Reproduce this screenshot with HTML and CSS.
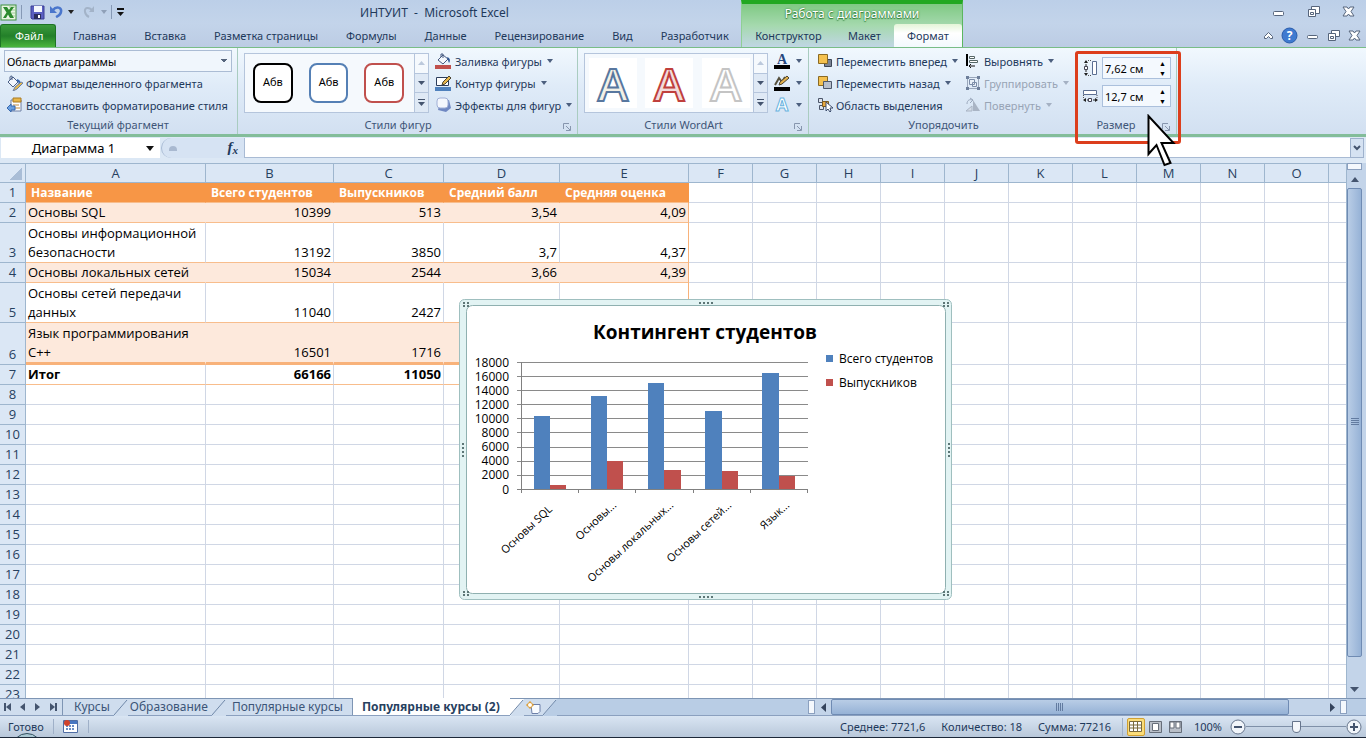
FILE: index.html
```html
<!doctype html>
<html lang="ru">
<head>
<meta charset="utf-8">
<title>ИНТУИТ - Microsoft Excel</title>
<link rel="stylesheet" href="styles.css">
</head>
<body>
<header class="top">
	<div class="top-left">
		<div class="quick">
			<svg class="logo" width="17" height="17" viewBox="0 0 17 17"><rect x="1" y="1" width="15" height="15" fill="#e9f5e4" stroke="#3f8f3f"/><path d="M9 3h6M9 6h6M9 9h6M9 12h6" stroke="#9fcf98"/><path d="M3 3h4l2 3 2-3h3l-3.500 5L14 14h-4l-2-3.500L6 14H3l3.500-5.500z" fill="#2c8a2e"/></svg>
			<i class="bar"></i>
			<button class="ico save" aria-label="Сохранить"><svg width="15" height="15" viewBox="0 0 15 15"><path d="M1 1h13v13H2l-1-1z" fill="#5a5fc0" stroke="#3b3f96"/><path d="M4 1h8v6H4z" fill="#f4f7fc"/><path d="M4 9h7v5H4z" fill="#2a2d5c"/><path d="M8 10h2v3H8z" fill="#fff"/></svg></button>
			<button class="ico undo" aria-label="Отменить"><svg width="14" height="14" viewBox="0 0 14 14"><path d="M4 5c3-4 9-3 8 2-.5 3-3 4-5 5" fill="none" stroke="#4a76cc" stroke-width="2.500"/><path d="M1 1v7h7z" fill="#4a76cc"/></svg></button>
			<svg class="car" width="7" height="4"><path d="M1 0h6L4 4z" fill="#222"/></svg>
			<button class="ico redo" aria-label="Вернуть"><svg width="14" height="14" viewBox="0 0 14 14"><path d="M10 5C7 2 2 2 3 7c.5 3 2 4 4 5" fill="none" stroke="#a3b3c8" stroke-width="2"/><path d="M12 1v6H7z" fill="#a3b3c8"/></svg></button>
			<svg class="car" width="7" height="4"><path d="M1 0h6L4 4z" fill="#8fa0b8"/></svg>
			<i class="bar"></i>
			<svg class="car" width="8" height="8"><path d="M1 1h7" stroke="#111" stroke-width="2"/><path d="M1 4h7L4.500 8z" fill="#111"/></svg>
			<div class="title">ИНТУИТ&nbsp; -&nbsp; Microsoft Excel</div>
		</div>
		<nav class="tabs">
			<a class="file" href="#">Файл</a>
			<a href="#">Главная</a>
			<a href="#">Вставка</a>
			<a href="#">Разметка страницы</a>
			<a href="#">Формулы</a>
			<a href="#">Данные</a>
			<a href="#">Рецензирование</a>
			<a href="#">Вид</a>
			<a href="#">Разработчик</a>
		</nav>
	</div>
	<div class="context">
		<div class="context-name">Работа с диаграммами</div>
		<nav class="tabs">
			<a href="#">Конструктор</a>
			<a href="#">Макет</a>
			<a class="on" href="#">Формат</a>
		</nav>
	</div>
	<div class="top-right">
		<div class="win">
			<button class="ico" aria-label="Свернуть"><svg width="13" height="13" viewBox="0 0 13 13"><rect x="1.500" y="6.500" width="10" height="4" rx="1" fill="#fff" stroke="#56657c"/></svg></button>
			<button class="ico" aria-label="Окно"><svg width="13" height="13" viewBox="0 0 13 13"><g fill="#fff" stroke="#56657c"><path d="M4.500 1.500h8v7h-8z"/><path d="M1.500 4.500h7v7h-7z"/><path d="M3.500 7.500h3v2h-3z"/></g></svg></button>
			<button class="ico" aria-label="Закрыть"><svg width="13" height="13" viewBox="0 0 13 13"><path d="M1 2h4l1.500 2L8 2h4L9 6.500l3 4.500H8L6.500 9 5 11H1l3-4.500z" fill="#fff" stroke="#56657c"/></svg></button>
		</div>
		<div class="win win-doc">
			<button class="ico" aria-label="Свернуть ленту"><svg width="9" height="9" viewBox="0 0 9 9"><path d="M.5 5.500l4-4 4 4v2h-2l-2-2-2 2h-2z" fill="#fff" stroke="#56657c"/></svg></button>
			<button class="ico" aria-label="Справка"><svg width="17" height="17" viewBox="0 0 17 17"><circle cx="8.500" cy="8.500" r="7.500" fill="#3f7ad0" stroke="#2a5cab"/><text x="8.500" y="13" text-anchor="middle" class="q">?</text></svg></button>
			<button class="ico" aria-label="Свернуть книгу"><svg width="13" height="13" viewBox="0 0 13 13"><rect x="1.500" y="6.500" width="10" height="3" rx="1" fill="#fff" stroke="#56657c"/></svg></button>
			<button class="ico" aria-label="Окно книги"><svg width="13" height="13" viewBox="0 0 13 13"><g fill="#fff" stroke="#56657c"><path d="M4.500 1.500h8v6h-8z"/><path d="M1.500 4.500h7v7h-7z"/><path d="M3.500 7.500h3v2h-3z"/></g></svg></button>
			<button class="ico" aria-label="Закрыть книгу"><svg width="13" height="13" viewBox="0 0 13 13"><path d="M1 2h4l1.500 2L8 2h4L9 6.500l3 4.500H8L6.500 9 5 11H1l3-4.500z" fill="#fff" stroke="#56657c"/></svg></button>
		</div>
	</div>
</header>

<section class="ribbon">
	<div class="group g-current">
		<div class="body col">
			<select class="area" aria-label="Элемент диаграммы"><option>Область диаграммы</option></select>
			<button class="cmd"><svg width="16" height="16" viewBox="0 0 16 16"><path d="M1 7l5-5 5 5-5 5z" fill="#f2f6fc" stroke="#4a5f86"/><path d="M3 5V2q0-1 2-1v4" fill="none" stroke="#4a5f86"/><path d="M10 5c3 1 3 3 2 5" stroke="#3465b0" stroke-width="2" fill="none"/><path d="M14 7l2 1-6 6-4 2 2-4z" fill="#e9bb4b" stroke="#6c7fa5"/></svg>Формат выделенного фрагмента</button>
			<button class="cmd"><svg width="16" height="16" viewBox="0 0 16 16"><path d="M4 3h10v11H4z" fill="#fff" stroke="#6d7fa3"/><path d="M6 1h8v4H6z" fill="#e8b64a" stroke="#a97b22"/><path d="M6 8h6M7 11h6" stroke="#c08a3e"/><path d="M0 11l4-4v2h4v4H4v2z" fill="#6aa0e2" stroke="#3869ae"/></svg>Восстановить форматирование стиля</button>
		</div>
		<div class="name">Текущий фрагмент</div>
	</div>

	<div class="group g-shapes">
		<div class="body">
			<div class="gallery">
				<button class="shape black">Абв</button>
				<button class="shape blue">Абв</button>
				<button class="shape red">Абв</button>
				<div class="scroll">
					<button aria-label="Вверх"><svg width="7" height="4"><path d="M0 4h7L3.500 0z" fill="#bcc9dc"/></svg></button>
					<button aria-label="Вниз"><svg width="7" height="4"><path d="M0 0h7L3.500 4z" fill="#44546e"/></svg></button>
					<button aria-label="Ещё"><svg width="7" height="7"><path d="M0 .5h7" stroke="#44546e"/><path d="M0 3h7L3.500 7z" fill="#44546e"/></svg></button>
				</div>
			</div>
			<div class="col">
				<button class="cmd"><svg width="17" height="16" viewBox="0 0 17 16"><path d="M3 7l5-5 5 4-5 5z" fill="#f4f8fd" stroke="#465a80"/><path d="M6 4V1h2v4" fill="none" stroke="#465a80"/><path d="M12 4c4 1 3 5 2 6-1-2-1-4-2-6z" fill="#2e5796"/><path d="M0 12h16v4H0z" fill="#c0504d"/></svg>Заливка фигуры<i class="dd"></i></button>
				<button class="cmd"><svg width="17" height="16" viewBox="0 0 17 16"><path d="M1.500 2.500h12v8h-12z" fill="#fff" stroke="#2c3d5c"/><path d="M14 1l2 2-6 6-3 1 1-3z" fill="#e8b64a" stroke="#4b4432"/><path d="M0 12h16v4H0z" fill="#4f81bd"/></svg>Контур фигуры<i class="dd"></i></button>
				<button class="cmd"><svg width="17" height="16" viewBox="0 0 17 16"><path d="M5 5l9-2 2 8-5 4-8-2z" fill="#7088c2"/><rect x="2" y="1" width="11" height="10" rx="3" fill="#f4f7fd" stroke="#a0afd6"/></svg>Эффекты для фигур<i class="dd"></i></button>
			</div>
		</div>
		<div class="name has-launch">Стили фигур</div>
		<svg class="launch" width="8" height="8"><path d="M.5 6V.5H6M3 3l4 4M7.500 3v4.500H3" fill="none" stroke="#8796ae"/></svg>
	</div>

	<div class="group g-art">
		<div class="body">
			<div class="gallery">
				<button class="art a1">A</button>
				<button class="art a2">A</button>
				<button class="art a3">A</button>
				<div class="scroll">
					<button aria-label="Вверх"><svg width="7" height="4"><path d="M0 4h7L3.500 0z" fill="#bcc9dc"/></svg></button>
					<button aria-label="Вниз"><svg width="7" height="4"><path d="M0 0h7L3.500 4z" fill="#44546e"/></svg></button>
					<button aria-label="Ещё"><svg width="7" height="7"><path d="M0 .5h7" stroke="#44546e"/><path d="M0 3h7L3.500 7z" fill="#44546e"/></svg></button>
				</div>
			</div>
			<div class="col">
				<button class="cmd" aria-label="Заливка текста"><svg width="17" height="16" viewBox="0 0 17 16"><text x="8" y="11" text-anchor="middle" class="ia">A</text><path d="M0 12h16v4H0z" fill="#000"/></svg><i class="dd"></i></button>
				<button class="cmd" aria-label="Контур текста"><svg width="17" height="16" viewBox="0 0 17 16"><path d="M1 10l4-7 3 4 3-5" fill="none" stroke="#55503e" stroke-width="2"/><path d="M13 1l2 2-7 6-3 1 1-3z" fill="#e3b14c" stroke="#4b4432"/><path d="M0 12h16v4H0z" fill="#000"/></svg><i class="dd"></i></button>
				<button class="cmd" aria-label="Текстовые эффекты"><svg width="17" height="16" viewBox="0 0 17 16"><text x="8" y="14" text-anchor="middle" class="ie">A</text></svg><i class="dd"></i></button>
			</div>
		</div>
		<div class="name has-launch">Стили WordArt</div>
		<svg class="launch" width="8" height="8"><path d="M.5 6V.5H6M3 3l4 4M7.500 3v4.500H3" fill="none" stroke="#8796ae"/></svg>
	</div>

	<div class="group g-arrange">
		<div class="body">
			<div class="col">
				<button class="cmd"><svg width="16" height="16" viewBox="0 0 16 16"><path d="M7.500 6.500h7v7h-7z" fill="#7b8495" stroke="#3d4657"/><path d="M1.500 1.500h9v9h-9z" fill="#f5c14e" stroke="#8a6a24"/></svg>Переместить вперед<i class="dd"></i></button>
				<button class="cmd"><svg width="16" height="16" viewBox="0 0 16 16"><path d="M1.500 1.500h9v9h-9z" fill="#f5c14e" stroke="#8a6a24"/><path d="M6.500 6.500h8v7h-8z" fill="#b9c0cc" stroke="#4c566a"/></svg>Переместить назад<i class="dd"></i></button>
				<button class="cmd"><svg width="16" height="16" viewBox="0 0 16 16"><path d="M1.500 1.500h4v4h-4zM2.500 8.500h4v4h-4z" fill="#dce2ec" stroke="#4c566a"/><path d="M5.500 4.500h6v5h-6z" fill="#e9a83e" stroke="#7c5a20"/><path d="M9 5v9l2-2 2 3 1-1-1-3h3z" fill="#fff" stroke="#3c4d6e"/></svg>Область выделения</button>
			</div>
			<div class="col">
				<button class="cmd"><svg width="16" height="16" viewBox="0 0 16 16"><path d="M2 1v12" stroke="#000" stroke-width="2"/><path d="M4.500 3.500h5v2h-5zM4.500 7.500h8v2h-8z" fill="#fff" stroke="#566"/><path d="M4 13h6M4 13l2-2M4 13l2 2" stroke="#111" fill="none"/></svg>Выровнять<i class="dd"></i></button>
				<button class="cmd" disabled><svg width="16" height="16" viewBox="0 0 16 16"><path d="M2.500 2.500h11v11h-11z" fill="none" stroke="#9aa7bb"/><path d="M4.500 4.500h5v5h-5zM7.500 7.500h4v4h-4z" fill="#e9f0f8" stroke="#7c8da8"/><path d="M1 1h3v3H1zM12 1h3v3h-3zM1 12h3v3H1zM12 12h3v3h-3z" fill="#6d7f9b"/></svg>Группировать<i class="dd"></i></button>
				<button class="cmd" disabled><svg width="16" height="16" viewBox="0 0 16 16"><path d="M8 14V3l7 11z" fill="#a9b4c4"/><path d="M1 14l6-5v5z" fill="#d6dde8" stroke="#a9b4c4"/><path d="M2 7c0-4 3-5 5-4M5 1l3 2-3 3" fill="none" stroke="#9aa7bb"/></svg>Повернуть<i class="dd"></i></button>
			</div>
		</div>
		<div class="name">Упорядочить</div>
	</div>

	<div class="group g-size">
		<div class="body col">
			<div class="size">
				<svg width="15" height="16" viewBox="0 0 15 16"><path d="M9.500 1.500h4v13h-4z" fill="#fff" stroke="#5c6f92"/><path d="M3 1v14" stroke="#222" stroke-dasharray="2 1"/><path d="M1 3l2-3 2 3zM1 13l2 3 2-3z" fill="#222"/><path d="M1.500 6.500h3v3h-3z" fill="#fff" stroke="#445"/><path d="M5 .5h4M5 15.500h4" stroke="#555" stroke-dasharray="1 1"/></svg>
				<span class="spin"><input aria-label="Высота" value="7,62 см"><span class="ud"><button aria-label="Больше">▲</button><button aria-label="Меньше">▼</button></span></span>
			</div>
			<div class="size">
				<svg width="15" height="16" viewBox="0 0 15 16"><path d="M.5 2.500h13v4H.5z" fill="#fff" stroke="#5c6f92"/><path d="M1 12h13" stroke="#222" stroke-dasharray="2 1"/><path d="M3 10l-3 2 3 2zM12 10l3 2-3 2z" fill="#222"/><path d="M5.500 10.500h3v3h-3z" fill="#fff" stroke="#445"/><path d="M.5 7v4M14 7v4" stroke="#555" stroke-dasharray="1 1"/></svg>
				<span class="spin"><input aria-label="Ширина" value="12,7 см"><span class="ud"><button aria-label="Больше">▲</button><button aria-label="Меньше">▼</button></span></span>
			</div>
		</div>
		<div class="name has-launch">Размер</div>
		<svg class="launch" width="8" height="8"><path d="M.5 6V.5H6M3 3l4 4M7.500 3v4.500H3" fill="none" stroke="#8796ae"/></svg>
		<i class="frame"></i>
		<svg class="cursor" width="30" height="54" viewBox="0 0 30 54"><path d="M1.500 2v38l8-9 8 20 6-2-9-20h12z" fill="#fff" stroke="#000" stroke-width="2"/></svg>
	</div>
</section>

<div class="formula">
	<input class="namebox" aria-label="Имя" value="Диаграмма 1">
	<svg class="name-dd" width="8" height="5"><path d="M0 0h8L4 5z" fill="#111"/></svg>
	<div class="fx-area"><i class="knob"></i><button class="fx">f<sub>x</sub></button></div>
	<input class="fx-input" aria-label="Строка формул">
	<button class="expand" aria-label="Развернуть"><svg width="8" height="6"><path d="M1 1l3 3 3-3" fill="none" stroke="#44546e" stroke-width="2"/></svg></button>
</div>

<main class="work">
	<div class="sheet">
		<table class="grid" id="grid">
			<colgroup><col class="c-num"><col class="c-a"><col class="c-b"><col class="c-c"><col class="c-d"><col class="c-e"></colgroup>
			<thead>
				<tr id="letters"><th class="corner"></th><th>A</th><th>B</th><th>C</th><th>D</th><th>E</th></tr>
			</thead>
			<tbody id="rows">
				<tr class="head"><th>1</th><td>Название</td><td>Всего студентов</td><td>Выпускников</td><td>Средний балл</td><td>Средняя оценка</td></tr>
				<tr class="data band"><th>2</th><td>Основы SQL</td><td>10399</td><td>513</td><td>3,54</td><td>4,09</td></tr>
				<tr class="data tall"><th>3</th><td>Основы информационной<br>безопасности</td><td>13192</td><td>3850</td><td>3,7</td><td>4,37</td></tr>
				<tr class="data band"><th>4</th><td>Основы локальных сетей</td><td>15034</td><td>2544</td><td>3,66</td><td>4,39</td></tr>
				<tr class="data tall"><th>5</th><td>Основы сетей передачи<br>данных</td><td>11040</td><td>2427</td><td></td><td></td></tr>
				<tr class="data band last"><th>6</th><td>Язык программирования<br>C++</td><td>16501</td><td>1716</td><td></td><td></td></tr>
				<tr class="data total"><th>7</th><td>Итог</td><td>66166</td><td>11050</td><td></td><td></td></tr>
			</tbody>
		</table>
		<div class="chart">
			<svg width="493" height="301" viewBox="0 0 493 301">
				<rect x=".5" y=".5" width="492" height="300" rx="5" fill="#e2f3f3" stroke="#9fbfbf"/>
				<rect x="7.500" y="6.500" width="479" height="288" rx="6" fill="#fff" stroke="#8fb0b0"/>
				<path d="M240 4h16M240 298h16" stroke="#5d7676" stroke-width="2" stroke-dasharray="2 2"/>
				<path d="M4 144v15M490 144v15" stroke="#5d7676" stroke-width="2" stroke-dasharray="2 2"/>
				<path d="M4 4h6M4 7h6M484 4h6M484 7h6M4 293h6M4 296h6M484 293h6M484 296h6" stroke="#5d7676" stroke-width="2" stroke-dasharray="2 2"/>
				<text class="ch-title" x="246" y="40" text-anchor="middle">Контингент студентов</text>
				<path d="M58 63.500h291M58 77.500h291M58 91.500h291M58 105.500h291M58 119.500h291M58 133.500h291M58 148.500h291M58 162.500h291M58 176.500h291" stroke="#8a8a8a"/>
				<g fill="#4f81bd"><path d="M75 117h16v73H75zM132 97h16v93h-16zM189 84h16v106h-16zM246 112h17v78h-17zM303 74h17v116h-17z"/></g>
				<g fill="#c0504d"><path d="M91 186h16v4H91zM148 162h16v28h-16zM205 171h17v19h-17zM263 172h16v18h-16zM320 177h16v13h-16z"/></g>
				<path d="M62.500 63v131M58 190.500h291M119.500 190v4M176.500 190v4M234.500 190v4M291.500 190v4M348.500 190v4" stroke="#808080" fill="none"/>
				<g class="ch-text" text-anchor="end">
					<text x="50" y="68">18000</text><text x="50" y="82">16000</text><text x="50" y="96">14000</text><text x="50" y="110">12000</text><text x="50" y="124">10000</text><text x="50" y="138">8000</text><text x="50" y="152">6000</text><text x="50" y="166">4000</text><text x="50" y="180">2000</text><text x="50" y="195">0</text>
				</g>
				<g class="ch-cat" text-anchor="end">
					<text transform="translate(94 211) rotate(-43)">Основы SQL</text>
					<text transform="translate(158 207) rotate(-43)">Основы...</text>
					<text transform="translate(215 207) rotate(-43)">Основы локальных...</text>
					<text transform="translate(273 207) rotate(-43)">Основы сетей...</text>
					<text transform="translate(331 207) rotate(-43)">Язык...</text>
				</g>
				<path d="M367 56h7v7h-7z" fill="#4f81bd"/><path d="M367 80h7v7h-7z" fill="#c0504d"/>
				<g class="ch-text"><text x="380" y="64">Всего студентов</text><text x="380" y="88">Выпускников</text></g>
			</svg>
		</div>
	</div>
	<div class="vscroll">
		<i class="split"></i>
		<button aria-label="Вверх"><svg width="8" height="5"><path d="M0 5h8L4 0z" fill="#44546e"/></svg></button>
		<i class="thumb"></i>
		<i class="rest"></i>
		<button aria-label="Вниз"><svg width="9" height="5"><path d="M0 0h9L4.500 5z" fill="#44546e"/></svg></button>
	</div>
</main>

<div class="sheets">
	<div class="nav">
		<button aria-label="Первый"><svg width="8" height="8"><path d="M1 0v8" stroke="#44546e" stroke-width="2"/><path d="M7 0v8L2 4z" fill="#44546e"/></svg></button>
		<button aria-label="Назад"><svg width="8" height="8"><path d="M6 0v8L1 4z" fill="#44546e"/></svg></button>
		<button aria-label="Вперед"><svg width="8" height="8"><path d="M1 0v8l5-4z" fill="#44546e"/></svg></button>
		<button aria-label="Последний"><svg width="8" height="8"><path d="M7 0v8" stroke="#44546e" stroke-width="2"/><path d="M1 0v8l5-4z" fill="#44546e"/></svg></button>
	</div>
	<button class="tab first">Курсы</button>
	<svg class="slash" width="14" height="17"><path d="M0 16L13 1" stroke="#6f87a8"/></svg>
	<button class="tab">Образование</button>
	<svg class="slash" width="14" height="17"><path d="M0 16L13 1" stroke="#6f87a8"/></svg>
	<button class="tab before">Популярные курсы</button>
	<button class="tab on">Популярные курсы (2)</button>
	<svg class="slash" width="14" height="17"><path d="M0 0h14L0 17z" fill="#fff"/><path d="M0 16L13 1" stroke="#6f87a8"/></svg>
	<button class="tab new" aria-label="Вставить лист"><svg width="15" height="13" viewBox="0 0 15 13"><path d="M5 3.500h9v7l-2 2H6z" fill="#f8fbff" stroke="#6d7fa8"/><circle cx="4" cy="4" r="2.500" fill="#fff" stroke="#dc9a2e"/><path d="M4 0v2M4 6v2M0 4h2M6 4h2" stroke="#dc9a2e"/></svg></button>
	<svg class="slash" width="14" height="17"><path d="M14 0v17H0z" fill="#b9cde5"/><path d="M0 16L13 1" stroke="#6f87a8"/></svg>
	<div class="hscroll">
		<i class="split"></i>
		<button aria-label="Влево"><svg width="5" height="9"><path d="M5 0v9L0 4.500z" fill="#34435c"/></svg></button>
		<i class="thumb"></i><i class="rest"></i>
		<button aria-label="Вправо"><svg width="5" height="9"><path d="M0 0v9l5-4.500z" fill="#34435c"/></svg></button>
		<i class="split"></i>
	</div>
</div>

<footer class="status">
	<span class="ready">Готово</span>
	<button class="ico macro" aria-label="Запись макроса"><svg width="15" height="13" viewBox="0 0 15 13"><path d="M.5.5h14v12H.5z" fill="#fff" stroke="#4f6da4"/><path d="M1 1h13v3H1z" fill="#4877c2"/><path d="M3 6h9M3 9h9" stroke="#6a8cc4" stroke-dasharray="2 1" stroke-width="2"/><circle cx="4" cy="3" r="3" fill="#d0432c"/></svg></button>
	<i class="orb"></i>
	<div class="stats"><span>Среднее: 7721,6</span><span>Количество: 18</span><span>Сумма: 77216</span></div>
	<div class="views">
		<button class="on" aria-label="Обычный"><svg width="13" height="11" viewBox="0 0 13 11"><path d="M.5.5h12v10H.5zM.5 4h12M.5 7h12M4.500 0v11M8.500 0v11" fill="#fff" stroke="#7a6a3c"/></svg></button>
		<button aria-label="Разметка страницы"><svg width="13" height="12" viewBox="0 0 13 12"><path d="M.5.5h12v11H.5z" fill="#b9bfc8" stroke="#666e7a"/><path d="M3.500 2.500h6v7h-6z" fill="#fff" stroke="#666e7a"/></svg></button>
		<button aria-label="Страничный"><svg width="13" height="12" viewBox="0 0 13 12"><path d="M.5.5h12v11H.5z" fill="#b9bfc8" stroke="#666e7a"/><path d="M1 1h4v6H1zM7 1h4v6H7z" fill="#fff" stroke="#666e7a"/></svg></button>
	</div>
	<label class="pct" for="zoom">100%</label>
	<button class="ico" aria-label="Уменьшить"><svg width="16" height="16" viewBox="0 0 16 16"><circle cx="8" cy="8" r="7" fill="#f1f5fa" stroke="#66758c"/><path d="M4 8h8" stroke="#44546e" stroke-width="2"/></svg></button>
	<input class="zoom" id="zoom" type="range" min="0" max="100" value="50">
	<button class="ico" aria-label="Увеличить"><svg width="16" height="16" viewBox="0 0 16 16"><circle cx="8" cy="8" r="7" fill="#f1f5fa" stroke="#66758c"/><path d="M4 8h8M8 4v8" stroke="#44546e" stroke-width="2"/></svg></button>
</footer>
<script src="script.js"></script>
</body>
</html>
```
FILE: styles.css
```css
*{
	box-sizing:border-box;
}
body{
	margin:0;
	height:100vh;
	display:flex;
	flex-direction:column;
	overflow:hidden;
	background:#dce8f5;
	font-family:"Noto Sans","Open Sans",sans-serif;
	font-size:11px;
	color:#1e395b;
}
button,input,select{
	font:inherit;
	color:inherit;
	background:none;
	border:0;
	padding:0;
	margin:0;
}
a{
	color:inherit;
	text-decoration:none;
}
svg{
	display:block;
	flex:none;
}
.col{
	display:flex;
	flex-direction:column;
}

/* заголовок и вкладки */
.top{
	display:flex;
	height:47px;
	background:linear-gradient(#bccfe8,#c3d4ea 50%,#bccce4);
}
.top-left{
	width:741px;
}
.quick{
	display:flex;
	align-items:center;
	height:24px;
	gap:4px;
}
.quick .bar{
	width:1px;
	height:14px;
	background:#8699b5;
}
.quick .save,.quick .redo{
	margin-left:4px;
}
.title{
	flex:1;
	text-align:center;
	font-size:12px;
}
.tabs{
	display:flex;
	height:23px;
	line-height:23px;
}
.tabs a{
	padding:0 14px;
	white-space:nowrap;
}
.tabs .file{
	width:56px;
	margin-right:3px;
	text-align:center;
	color:#fff;
	border-radius:3px 3px 0 0;
	border:1px solid #1d7424;
	border-bottom:0;
	line-height:21px;
	background:linear-gradient(#3c9a3c,#238029 50%,#49b53c);
}
.context{
	width:222px;
	border-top:4px solid #22a822;
	border-left:1px solid #8fcf95;
	border-right:1px solid #5bb65f;
	background:linear-gradient(#7fc983,#a5d9ae 50%,#c0d6e4);
}
.context-name{
	height:20px;
	line-height:19px;
	text-align:center;
	font-size:12px;
	color:#fff;
	text-shadow:0 0 2px #2c7a36,0 1px 1px #2c7a36;
}
.context .tabs a{
	padding:0 12px;
	flex:1 1 auto;
	text-align:center;
}
.context .tabs .on{
	border-radius:3px 3px 0 0;
	background:linear-gradient(#e4f5d8,#fff 40%,#f3f9fe);
}
.top-right{
	flex:1;
}
.win{
	display:flex;
	justify-content:flex-end;
	align-items:center;
	height:23px;
	gap:22px;
	padding-right:11px;
}
.win-doc{
	gap:8px;
	height:24px;
	padding-right:5px;
}
.q{
	font:bold 12px "Open Sans",sans-serif;
	fill:#fff;
}

/* лента */
.ribbon{
	display:flex;
	height:90px;
	border-top:1px solid #79bd87;
	border-bottom:3px solid #83bd9a;
	background:linear-gradient(#f1f8fe,#dfebf8 45%,#d2e0f1);
}
.group{
	position:relative;
	display:flex;
	flex-direction:column;
	border-right:1px solid #a9ccc0;
	padding:2px 5px 0 6px;
}
.g-current{
	width:238px;
	padding-left:4px;
}
.g-shapes{
	width:340px;
}
.g-art{
	width:231px;
}
.g-arrange{
	width:266px;
	border-right:0;
}
.g-size{
	width:102px;
}
.body{
	display:flex;
	height:66px;
	gap:6px;
}
.body.col{
	gap:0;
}
.name{
	height:17px;
	line-height:17px;
	text-align:center;
	color:#3f5678;
}
.has-launch{
	padding-right:20px;
}
.launch{
	position:absolute;
	right:6px;
	bottom:3px;
}
.cmd{
	display:flex;
	align-items:center;
	height:22px;
	gap:3px;
	white-space:nowrap;
}
.g-current .cmd{
	padding-left:3px;
}
.cmd:disabled{
	color:#98a4b5;
}
.dd{
	border:3px solid transparent;
	border-top:4px solid #4c5f7e;
	border-bottom:0;
	margin-left:2px;
}
.cmd:disabled .dd{
	border-top-color:#a5b1c3;
}
.area{
	appearance:none;
	height:22px;
	border:1px solid #abbcd4;
	padding:0 2px;
	color:#000;
	background:linear-gradient(to top right,transparent 50%,#56657c 50%) right 7px center/3px 4px no-repeat,linear-gradient(to top left,transparent 50%,#56657c 50%) right 4px center/3px 4px no-repeat,#f0f6fc;
}
.gallery{
	display:flex;
	width:185px;
	height:60px;
	margin-top:3px;
	border:1px solid #b5c5dc;
	background:#f5f9fd;
	align-items:center;
	justify-content:space-between;
	padding-left:8px;
}
.shape{
	width:40px;
	height:40px;
	margin-right:16px;
	border:2px solid;
	border-radius:8px;
	background:#fff;
	color:#000;
	padding-bottom:4px;
}
.shape.black{
	border-color:#000;
}
.shape.blue{
	border-color:#5580b5;
}
.shape.red{
	border-color:#c0504d;
	margin-right:10px;
}
.art{
	width:48px;
	height:50px;
	margin-right:8px;
	background:#fff;
	font:600 46px/48px "Open Sans",sans-serif;
}
.g-art .gallery{
	padding-left:4px;
	width:184px;
}
.a1{
	color:#f3f1e6;
	-webkit-text-stroke:2px #58779f;
}
.a2{
	color:#f2dcdb;
	-webkit-text-stroke:2px #c0403d;
}
.a3{
	color:#fff;
	-webkit-text-stroke:2px #c4c4c4;
	margin-right:3px;
}
.scroll{
	display:flex;
	flex-direction:column;
	width:14px;
	align-self:stretch;
	border-left:1px solid #b5c5dc;
}
.scroll button{
	flex:1;
	display:flex;
	align-items:center;
	justify-content:center;
}
.scroll button + button{
	border-top:1px solid #b5c5dc;
	background:#dfe9f5;
}
.ia{
	font:bold 14px "Liberation Serif",serif;
	fill:#27477d;
}
.ie{
	font:bold 18px "Open Sans",sans-serif;
	fill:#fff;
	stroke:#68b4e0;
}
.g-arrange{
	padding-left:8px;
}
.g-arrange .body{
	gap:7px;
}
.g-size .body{
	padding:7px 0 0 2px;
	gap:6px;
}
.size{
	display:flex;
	align-items:center;
	gap:4px;
}
.spin{
	display:flex;
	width:71px;
	height:22px;
	border:1px solid #abc0dc;
	background:#f4f9fe;
	color:#000;
}
.spin input{
	width:56px;
	padding-left:2px;
}
.ud{
	display:flex;
	flex-direction:column;
	justify-content:center;
	gap:3px;
}
.ud button{
	font-size:7px;
	line-height:7px;
	height:7px;
}
.frame{
	position:absolute;
	left:0;
	top:3px;
	width:106px;
	height:93px;
	border:3px solid #dc3e1c;
	border-radius:3px;
	z-index:2;
}
.cursor{
	position:absolute;
	left:72px;
	top:66px;
	z-index:3;
}

/* строка формул */
.formula{
	display:flex;
	height:26px;
	padding:1px 2px 5px 1px;
	background:#dce8f5;
}
.namebox{
	width:145px;
	background:#fff;
	color:#000;
	font-size:13px;
	text-align:center;
}
.name-dd{
	box-sizing:content-box;
	padding:8px 6px 7px 0;
	background:#fff;
}
.fx-area{
	display:flex;
	justify-content:space-between;
	align-items:center;
	width:84px;
	margin-left:1px;
	padding:0 6px 0 7px;
	border:1px solid #a9bbd4;
	border-width:0 1px 0 1px;
	border-radius:10px 0 0 10px;
	background:#d6e3f3;
}
.knob{
	width:8px;
	height:5px;
	border-radius:5px 5px 0 0;
	background:#a9b9d0;
}
.fx{
	font:italic bold 15px "Liberation Serif",serif;
	line-height:16px;
}
.fx sub{
	font-size:11px;
	vertical-align:-2px;
}
.fx-input{
	flex:1;
	min-width:0;
	background:#fff;
	border-bottom:1px solid #a9bbd4;
}
.expand{
	width:14px;
	border:1px solid #9fb2cd;
	padding-left:2px;
	background:#d5e2f2;
}

/* лист */
.work{
	display:flex;
	flex:1;
	min-height:0;
}
.sheet{
	position:relative;
	flex:1;
	min-width:0;
	overflow:hidden;
	background:#fff;
}
.grid{
	table-layout:fixed;
	width:0;
	border-spacing:0;
	font-family:"Open Sans","Noto Sans",sans-serif;
	font-size:13px;
	line-height:19px;
	color:#000;
}
.c-num{width:26px}
.c-a{width:180px}
.c-b{width:128px}
.c-c{width:110px}
.c-d{width:116px}
.c-e{width:129px}
.c-x{width:64px}
.grid th{
	padding:0;
	font-weight:normal;
	color:#27415f;
	background:#dbe7f5;
	border-right:1px solid #9eb6ce;
	border-bottom:1px solid #9eb6ce;
	vertical-align:bottom;
}
.grid thead th{
	border-top:1px solid #9eb6ce;
	height:20px;
	line-height:18px;
}
.grid .corner{
	background:linear-gradient(135deg,transparent 50%,#a9bdd6 50%) 9px 3px/13px 13px no-repeat,#dbe7f5;
}
.grid td{
	height:20px;
	padding:0 2px;
	border-right:1px solid #d0d7e5;
	border-bottom:1px solid #d0d7e5;
	vertical-align:bottom;
	white-space:nowrap;
}
.grid .tall td{
	height:40px;
}
.grid .last td{
	height:42px;
}
.head .t,.data .t{
	border-bottom-color:#f8bd8c;
}
.data .t + .t{
	text-align:right;
}
.grid .head .t{
	background:#f79646;
	color:#fff;
	font-size:12px;
	font-weight:bold;
	border-right-color:#f79646;
	padding-left:5px;
}
.grid .band .t{
	background:#fde9dc;
	border-right-color:#fde9dc;
}
.grid .data .e{
	border-right-color:#f8b27a;
}
.grid .last .t{
	border-bottom:3px solid #f8b27a;
}
.total .t{
	font-weight:bold;
}
.chart{
	position:absolute;
	left:459px;
	top:136px;
}
.ch-title{
	font:bold 19px "Open Sans",sans-serif;
	fill:#000;
}
.ch-text{
	font:12px "Open Sans",sans-serif;
	fill:#000;
}
.ch-cat{
	font:11px "Open Sans",sans-serif;
	fill:#000;
}

/* прокрутка */
.vscroll{
	display:flex;
	flex-direction:column;
	width:20px;
	padding-right:4px;
	border-left:1px solid #9eb6ce;
	background:#c3d4e9;
}
.vscroll .split{
	height:7px;
	border:1px solid #8ba0bf;
	background:#f4f8fd;
}
.vscroll button{
	height:18px;
	display:flex;
	align-items:center;
	justify-content:center;
}
.vscroll .thumb{
	flex:20;
	border:1px solid #6f8bb3;
	border-radius:2px;
	background:repeating-linear-gradient(#627ba0 0 1px,transparent 1px 2px) center/8px 8px no-repeat,linear-gradient(90deg,#b9cde6,#96b2d6);
}
.vscroll .rest{
	flex:1;
}

/* ярлычки листов */
.sheets{
	display:flex;
	height:18px;
	border-top:1px solid #7e95b4;
	border-bottom:1px solid #8ba0bf;
	background:#b9cde5;
	color:#3c5578;
	font-size:12px;
}
.nav{
	display:flex;
	align-items:center;
	gap:7px;
	width:62px;
	padding-left:4px;
	background:#cfddee;
}
.tab{
	padding:0 4px 0 2px;
	line-height:16px;
	background:#cfddee;
	white-space:nowrap;
}
.slash{
	background:#cfddee;
}
.tab.first{
	padding-left:11px;
	border-left:1px solid #7e95b4;
}
.tab.before{
	padding:0 9px 0 6px;
	border-right:1px solid #7e95b4;
}
.tab.on{
	padding:0 10px 0 9px;
	margin-top:-1px;
	font-weight:bold;
	background:#fff;
	color:#27415f;
}
.tab.new{
	padding:0 2px;
}
.hscroll{
	display:flex;
	align-items:center;
	width:539px;
	margin:0 19px 0 auto;
	background:#c3d4e9;
}
.hscroll .split{
	width:7px;
	height:14px;
	border:1px solid #8ba0bf;
	background:#f4f8fd;
}
.hscroll button{
	width:16px;
	display:flex;
	justify-content:center;
}
.hscroll .thumb{
	flex:13;
	height:16px;
	border:1px solid #6f8bb3;
	border-radius:2px;
	background:repeating-linear-gradient(90deg,#627ba0 0 1px,transparent 1px 2px) center/8px 8px no-repeat,linear-gradient(#b9cde6,#96b2d6);
}
.hscroll .rest{
	flex:1;
}

/* строка состояния */
.status{
	position:relative;
	display:flex;
	align-items:center;
	height:22px;
	padding:0 4px 0 8px;
	border-bottom:1px solid #1c2838;
	background:linear-gradient(#d9e5f3,#b9c8da);
	overflow:hidden;
}
.ready{
	padding-right:9px;
	border-right:1px solid #9fb0c8;
}
.macro{
	padding:0 10px 0 9px;
	border-right:1px solid #9fb0c8;
}
.orb{
	position:absolute;
	left:12px;
	top:17px;
	width:30px;
	height:30px;
	border:1px solid #31505f;
	border-radius:15px;
	background:#a9c7d2;
}
.stats{
	display:flex;
	gap:16px;
	margin-left:auto;
	padding-right:11px;
}
.views{
	display:flex;
	gap:2px;
	padding-left:4px;
	border-left:1px solid #9fb0c8;
}
.views button{
	width:18px;
	height:18px;
	display:flex;
	align-items:center;
	justify-content:center;
}
.views .on{
	border:1px solid #d0a033;
	border-radius:2px;
	background:#fbdd79;
}
.pct{
	padding:0 8px 0 9px;
}
.zoom{
	appearance:none;
	width:100px;
	height:16px;
	background:linear-gradient(#7f90a8,#7f90a8) center/100% 1px no-repeat;
}
.zoom::-webkit-slider-thumb{
	appearance:none;
	width:9px;
	height:12px;
	border:1px solid #66758c;
	border-radius:1px 1px 5px 5px;
	background:#f4f7fb;
}
```
FILE: script.js
```js
var letters=document.getElementById("letters");
var rows=document.getElementById("rows");
var cols=document.querySelector("#grid colgroup");
var extra="FGHIJKLMNOP";

for(var i=0;i<extra.length;i++){
	var c=document.createElement("col");
	c.className="c-x";
	cols.appendChild(c);
	var th=document.createElement("th");
	// последний столбец виден только краем
	th.textContent=extra[i]=="P"?"":extra[i];
	letters.appendChild(th);
}

// ячейки таблицы с данными
var trs=rows.getElementsByTagName("tr");
for(var i=0;i<trs.length;i++){
	var tds=trs[i].getElementsByTagName("td");
	for(var j=0;j<tds.length;j++){
		tds[j].className="t";
	}
	tds[4].className="t e";
	addCells(trs[i],extra.length);
}

// пустые строки
for(var n=8;n<=23;n++){
	var tr=document.createElement("tr");
	var num=document.createElement("th");
	num.textContent=n;
	tr.appendChild(num);
	addCells(tr,5+extra.length);
	rows.appendChild(tr);
}

function addCells(tr,count){
	for(var k=0;k<count;k++){
		tr.appendChild(document.createElement("td"));
	}
}
```
